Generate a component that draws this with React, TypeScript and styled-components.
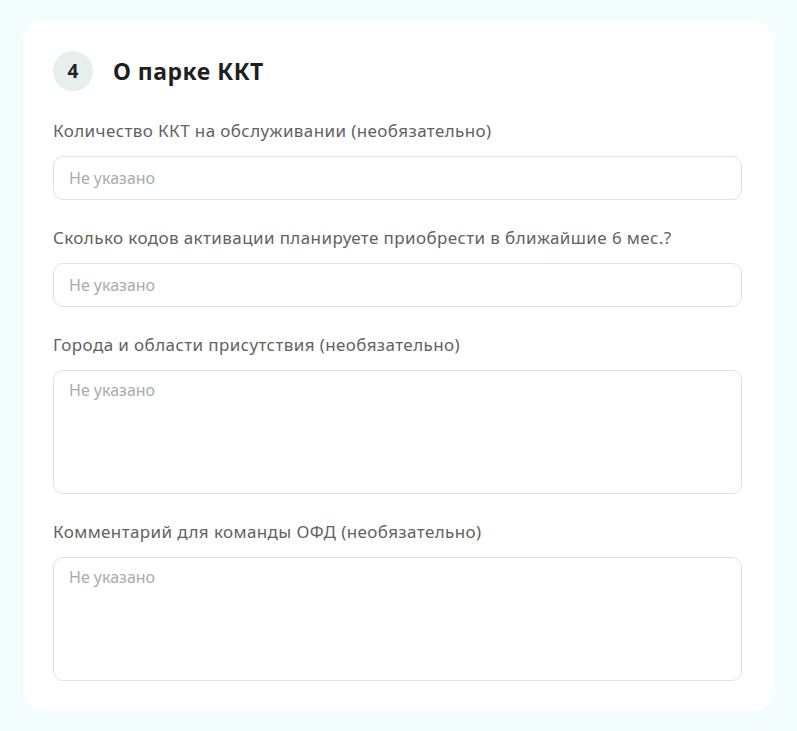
import React from "react";
import styled, { createGlobalStyle } from "styled-components";

const GlobalStyle = createGlobalStyle`
  html, body {
    margin: 0;
    padding: 0;
    background: #f3fdfe;
  }
  body {
    font-family: "Noto Sans", "Liberation Sans", sans-serif;
  }
  * {
    box-sizing: border-box;
  }
`;

const Page = styled.div`
  padding: 20px 24px 20px 23px;
  width: 797px;
`;

const Card = styled.section`
  background: #fff;
  border-radius: 20px;
  padding: 31px 31px 30px 30px;
  width: 750px;
`;

const Header = styled.div`
  display: flex;
  align-items: center;
  gap: 20px;
  margin-bottom: 29px;
`;

const StepBadge = styled.div`
  width: 40px;
  height: 40px;
  border-radius: 50%;
  background: #e6eeee;
  color: #222;
  display: flex;
  align-items: center;
  justify-content: center;
  font-size: 19px;
  font-weight: 700;
`;

const Title = styled.h2`
  margin: 0;
  font-size: 23px;
  font-weight: 700;
  letter-spacing: 0.5px;
  color: #1f1f1f;
`;

const Field = styled.div`
  display: flex;
  flex-direction: column;
  gap: 14px;
  & + & {
    margin-top: 27px;
  }
`;

const Label = styled.label`
  font-size: 17px;
  line-height: 22px;
  letter-spacing: 0.4px;
  color: #626262;
`;

const inputBase = `
  width: 100%;
  border: 1px solid #e2e2e2;
  border-radius: 10px;
  background: #fff;
  font-family: "Noto Sans", "Liberation Sans", sans-serif;
  font-size: 16px;
  color: #333;
  padding: 0 15px;
  outline: none;
  &::placeholder {
    color: #ababab;
  }
`;

const Input = styled.input`
  ${inputBase}
  height: 44px;
`;

const TextArea = styled.textarea<{ $height: number }>`
  ${inputBase}
  height: ${(p) => p.$height}px;
  padding-top: 8px;
  line-height: 22px;
  resize: none;
`;

const fields = [
  { label: "Количество ККТ на обслуживании (необязательно)", multi: false },
  { label: "Сколько кодов активации планируете приобрести в ближайшие 6 мес.?", multi: false },
  { label: "Города и области присутствия (необязательно)", multi: true },
  { label: "Комментарий для команды ОФД (необязательно)", multi: true },
];

export default function App() {
  return (
    <Page>
      <GlobalStyle />
      <Card>
        <Header>
          <StepBadge>4</StepBadge>
          <Title>О парке ККТ</Title>
        </Header>
        {fields.map((f, i) => (
          <Field key={i}>
            <Label>{f.label}</Label>
            {f.multi ? (
              <TextArea $height={124} placeholder="Не указано" />
            ) : (
              <Input placeholder="Не указано" />
            )}
          </Field>
        ))}
      </Card>
    </Page>
  );
}
